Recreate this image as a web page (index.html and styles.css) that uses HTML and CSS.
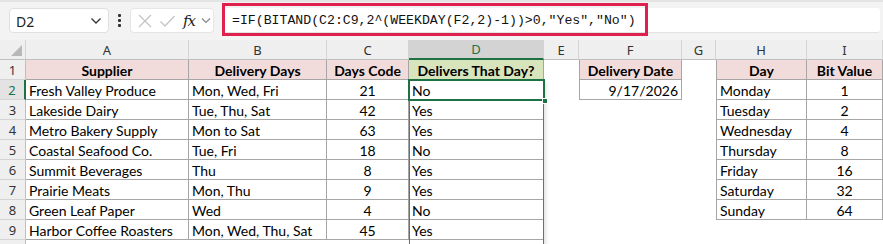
FILE: index.html
```html
<!DOCTYPE html>
<html>
<head>
<meta charset="utf-8">
<link rel="stylesheet" href="styles.css">
</head>
<body>
<div class="toolbar">
  <div class="namebox"><span class="nb-text">D2</span>
    <svg class="chev" width="12" height="8" viewBox="0 0 12 8"><path d="M1.5 1.5 L6 6 L10.5 1.5" fill="none" stroke="#333" stroke-width="1.3"/></svg>
  </div>
  <div class="dots"><i></i><i></i><i></i></div>
  <div class="iconbox">
    <svg width="16" height="16" viewBox="0 0 16 16"><path d="M2 2 L14 14 M14 2 L2 14" stroke="#c4c4c4" stroke-width="1.3" fill="none"/></svg>
    <svg width="17" height="16" viewBox="0 0 17 16"><path d="M1.5 8.5 L6 13 L15.5 3" stroke="#c4c4c4" stroke-width="1.3" fill="none"/></svg>
    <span class="fx">fx</span>
    <svg width="10" height="7" viewBox="0 0 10 7"><path d="M1 1.5 L5 5.5 L9 1.5" fill="none" stroke="#888" stroke-width="1.2"/></svg>
  </div>
  <div class="formula">
    <span class="ftext">=IF(BITAND(C2:C9,2^(WEEKDAY(F2,2)-1))&gt;0,"Yes","No")</span>
    <div class="highlight"></div>
  </div>
</div>
<div class="sheet">
  <div class="ch corner"><span class="tri"></span></div>
  <div class="ch">A</div><div class="ch">B</div><div class="ch">C</div><div class="ch sel">D</div><div class="ch">E</div><div class="ch">F</div><div class="ch">G</div><div class="ch">H</div><div class="ch">I</div>

  <div class="rh">1</div>
  <div class="c hd b">Supplier</div><div class="c hd b">Delivery Days</div><div class="c hd b">Days Code</div><div class="c hdg b">Delivers That Day?</div><div class="c"></div><div class="c hd b bl">Delivery Date</div><div class="c"></div><div class="c hd b bl">Day</div><div class="c hd b">Bit Value</div>

  <div class="rh rsel">2</div>
  <div class="c b">Fresh Valley Produce</div><div class="c b">Mon, Wed, Fri</div><div class="c b ctr">21</div><div class="c b">No</div><div class="c"></div><div class="c b bl rt">9/17/2026</div><div class="c"></div><div class="c b bl">Monday</div><div class="c b ctr">1</div>

  <div class="rh">3</div>
  <div class="c b">Lakeside Dairy</div><div class="c b">Tue, Thu, Sat</div><div class="c b ctr">42</div><div class="c b">Yes</div><div class="c"></div><div class="c"></div><div class="c"></div><div class="c b bl">Tuesday</div><div class="c b ctr">2</div>

  <div class="rh">4</div>
  <div class="c b">Metro Bakery Supply</div><div class="c b">Mon to Sat</div><div class="c b ctr">63</div><div class="c b">Yes</div><div class="c"></div><div class="c"></div><div class="c"></div><div class="c b bl">Wednesday</div><div class="c b ctr">4</div>

  <div class="rh">5</div>
  <div class="c b">Coastal Seafood Co.</div><div class="c b">Tue, Fri</div><div class="c b ctr">18</div><div class="c b">No</div><div class="c"></div><div class="c"></div><div class="c"></div><div class="c b bl">Thursday</div><div class="c b ctr">8</div>

  <div class="rh">6</div>
  <div class="c b">Summit Beverages</div><div class="c b">Thu</div><div class="c b ctr">8</div><div class="c b">Yes</div><div class="c"></div><div class="c"></div><div class="c"></div><div class="c b bl">Friday</div><div class="c b ctr">16</div>

  <div class="rh">7</div>
  <div class="c b">Prairie Meats</div><div class="c b">Mon, Thu</div><div class="c b ctr">9</div><div class="c b">Yes</div><div class="c"></div><div class="c"></div><div class="c"></div><div class="c b bl">Saturday</div><div class="c b ctr">32</div>

  <div class="rh">8</div>
  <div class="c b">Green Leaf Paper</div><div class="c b">Wed</div><div class="c b ctr">4</div><div class="c b">No</div><div class="c"></div><div class="c"></div><div class="c"></div><div class="c b bl">Sunday</div><div class="c b ctr">64</div>

  <div class="rh">9</div>
  <div class="c b">Harbor Coffee Roasters</div><div class="c b">Mon, Wed, Thu, Sat</div><div class="c b ctr">45</div><div class="c b">Yes</div><div class="c"></div><div class="c"></div><div class="c"></div><div class="c"></div><div class="c"></div>

  <div class="spill"></div>
  <div class="active"><span class="handle"></span></div>
</div>
<div class="tail"><div class="tail-rh"></div></div>
</body>
</html>
```
FILE: styles.css
```css
* { box-sizing: border-box; }
html, body { height: 244px; }
body { margin: 0; background: #fff; font-family: "Noto Sans", sans-serif; overflow: hidden; }

.toolbar {
  height: 40px;
  background: #f3f3f3;
  border-top: 2px solid #e4e4e4;
  display: flex;
  align-items: flex-start;
  padding: 6px 3px 0 9px;
}
.namebox {
  width: 100px; height: 25px;
  background: #fff;
  border: 1px solid #e0e0e0;
  border-radius: 4px;
  display: flex; align-items: center; justify-content: space-between;
  padding: 0 6px 0 6px;
  font-size: 14px; color: #222;
}
.nb-text { padding-top: 1px; }
.dots { width: 21px; height: 25px; display: flex; flex-direction: column; align-items: center; justify-content: center; gap: 2px; }
.dots i { display: block; width: 3px; height: 3px; background: #333; border-radius: 1px; }
.iconbox {
  width: 84px; height: 25px;
  background: #fff;
  border: 1px solid #e6e6e6;
  border-radius: 4px;
  display: flex; align-items: center;
  padding-left: 6px; gap: 6px;
}
.fx { font-family: "DejaVu Serif", "Liberation Serif", serif; font-style: italic; font-size: 15px; color: #222; margin-left: 1px; letter-spacing: -1px; }
.formula {
  position: relative;
  flex: 1;
  height: 25px;
  margin-left: 8px;
  background: #fff;
  border-radius: 3px;
  border-bottom: 1px solid #e2e2e2;
  display: flex; align-items: center;
  padding-left: 10px;
}
.ftext { font-family: "Liberation Mono", monospace; font-size: 13.2px; color: #111; padding-top: 1px; }
.highlight {
  position: absolute;
  left: 0; top: -5px;
  width: 426px; height: 33px;
  border: 3px solid #e0204d;
}

.sheet {
  position: relative;
  display: grid;
  grid-template-columns: 26px 163px 138px 82px 135px 35px 103px 34px 91px 75px 1px;
  grid-auto-rows: 20px;
  font-family: "Lato", sans-serif;
  font-size: 14px;
  color: #000;
}
.ch {
  background: #efefef;
  border-right: 1px solid #d4d4d4;
  border-bottom: 1px solid #bfbfbf;
  font-family: "Noto Sans", sans-serif;
  font-size: 13px; color: #333;
  display: flex; align-items: center; justify-content: center;
}
.ch:nth-child(10) { grid-column: span 2; }
.ch.sel { background: #d3d3d3; color: #1e7145; border-bottom: 2px solid #1e7145; }
.corner { position: relative; }
.tri {
  position: absolute; right: 3px; bottom: 3px;
  width: 0; height: 0;
  border-left: 11px solid transparent;
  border-bottom: 11px solid #b8b8b8;
}
.rh {
  grid-column: 1;
  background: #efefef;
  border-right: 1px solid #bfbfbf;
  border-bottom: 1px solid #d4d4d4;
  font-family: "Noto Sans", sans-serif;
  font-size: 13px; color: #333;
  display: flex; align-items: center; justify-content: center;
}
.rh.rsel { color: #1e7145; border-right: 2px solid #1e7145; background: #e3e3e3; }
.c {
  padding: 1px 3px 0;
  line-height: 19px;
  white-space: nowrap;
  overflow: hidden;
}
.c:nth-child(10n+10) { grid-column-end: span 2; }
.b { border-right: 1px solid #a6a6a6; border-bottom: 1px solid #a6a6a6; }
.bl { border-left: 1px solid #a6a6a6; }
.hd { background: #f2dcdb; font-weight: bold; text-align: center; }
.hdg { background: #d8e4bc; font-weight: bold; text-align: center; }
.ctr { text-align: center; }
.rt { text-align: right; }

.tail { height: 4px; }
.tail-rh { width: 26px; height: 4px; background: #efefef; border-right: 1px solid #bfbfbf; }

.spill {
  position: absolute;
  left: 409px; top: 40px;
  width: 135px; height: 180px;
  border: 1px solid #4472c4;
  box-shadow: 2px 2px 4px rgba(0,0,0,0.12);
  pointer-events: none;
}
.active {
  position: absolute;
  left: 408px; top: 39px;
  width: 137px; height: 22px;
  border: 2px solid #1e7145;
}
.handle {
  position: absolute; right: -5px; bottom: -5px;
  width: 6px; height: 6px; background: #1e7145; border: 1px solid #fff;
}
```
